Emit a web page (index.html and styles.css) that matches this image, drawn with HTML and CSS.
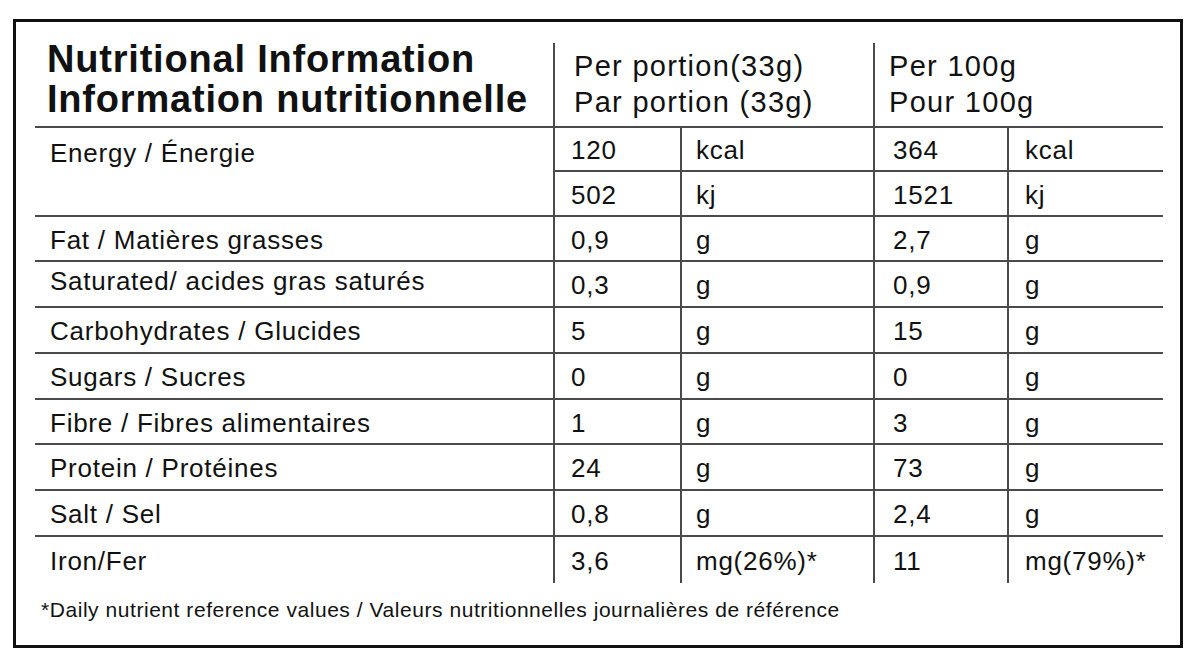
FILE: index.html
```html
<!DOCTYPE html>
<html lang="en">
<head>
<meta charset="utf-8">
<title>Nutritional Information</title>
<link rel="stylesheet" href="styles.css">
</head>
<body>
<div class="panel">
  <div class="table">
    <div class="cell head title"><div class="title-text">Nutritional Information<br>Information nutritionnelle</div></div>
    <div class="cell head col-a">Per portion(33g)<br>Par portion (33g)</div>
    <div class="cell head col-b">Per 100g<br>Pour 100g</div>

    <div class="cell label energy">Energy / Énergie</div>
    <div class="cell v1">120</div><div class="cell u1">kcal</div><div class="cell v2">364</div><div class="cell u2">kcal</div>
    <div class="cell v1">502</div><div class="cell u1">kj</div><div class="cell v2">1521</div><div class="cell u2">kj</div>

    <div class="cell label">Fat / Matières grasses</div>
    <div class="cell v1">0,9</div><div class="cell u1">g</div><div class="cell v2">2,7</div><div class="cell u2">g</div>

    <div class="cell label up">Saturated/ acides gras saturés</div>
    <div class="cell v1">0,3</div><div class="cell u1">g</div><div class="cell v2">0,9</div><div class="cell u2">g</div>

    <div class="cell label">Carbohydrates / Glucides</div>
    <div class="cell v1">5</div><div class="cell u1">g</div><div class="cell v2">15</div><div class="cell u2">g</div>

    <div class="cell label">Sugars / Sucres</div>
    <div class="cell v1">0</div><div class="cell u1">g</div><div class="cell v2">0</div><div class="cell u2">g</div>

    <div class="cell label">Fibre / Fibres alimentaires</div>
    <div class="cell v1">1</div><div class="cell u1">g</div><div class="cell v2">3</div><div class="cell u2">g</div>

    <div class="cell label">Protein / Protéines</div>
    <div class="cell v1">24</div><div class="cell u1">g</div><div class="cell v2">73</div><div class="cell u2">g</div>

    <div class="cell label">Salt / Sel</div>
    <div class="cell v1">0,8</div><div class="cell u1">g</div><div class="cell v2">2,4</div><div class="cell u2">g</div>

    <div class="cell label last">Iron/Fer</div>
    <div class="cell v1 last">3,6</div><div class="cell u1 last">mg(26%)*</div><div class="cell v2 last">11</div><div class="cell u2 last">mg(79%)*</div>
  </div>
  <p class="note">*Daily nutrient reference values / Valeurs nutritionnelles journalières de référence</p>
</div>
</body>
</html>
```

FILE: styles.css
```css
html, body {
  margin: 0;
  padding: 0;
  background: #ffffff;
}

body {
  font-family: "Liberation Sans", Arial, Helvetica, sans-serif;
  color: #111111;
}

.panel {
  box-sizing: border-box;
  width: 1170px;
  height: 629px;
  margin: 19px 0 0 13px;
  border: 3px solid #111111;
  padding: 21px 17px 0 19px;
}

.table {
  display: grid;
  grid-template-columns: 518px 127px 193px 134px 156px;
  grid-template-rows: 85px 44px 45px 45px 46px 46px 46px 45px 46px 46px 46px;
  width: 1128px;
}

.cell {
  box-sizing: border-box;
  display: flex;
  align-items: center;
  border-bottom: 2px solid #4a4a4a;
  font-size: 26px;
  letter-spacing: 0.75px;
  white-space: nowrap;
  padding-top: 3px;
}

.cell.last {
  border-bottom: none;
}

.head {
  display: block;
}

.title {
  font-weight: bold;
  font-size: 38px;
  line-height: 40px;
  letter-spacing: 0.8px;
  padding-left: 12px;
  padding-top: 0;
}

.title-text {
  margin-top: -4px;
}

.col-a,
.col-b {
  grid-column: span 2;
  border-left: 2px solid #4a4a4a;
  font-size: 29px;
  line-height: 36px;
  letter-spacing: 1.3px;
  padding-top: 5px;
}

.col-a {
  padding-left: 19px;
}

.col-b {
  padding-left: 14px;
}

.label {
  padding-left: 15px;
}

.label.up {
  padding-top: 0;
  padding-bottom: 5px;
}

.energy {
  grid-row: span 2;
  align-items: flex-start;
  padding-top: 10px;
}

.v1, .u1, .v2, .u2 {
  border-left: 2px solid #4a4a4a;
}

.v1 {
  padding-left: 16px;
}

.u1 {
  padding-left: 14px;
}

.v2 {
  padding-left: 18px;
}

.u2 {
  padding-left: 16px;
}

.note {
  margin: 15px 0 0 0;
  padding-left: 6px;
  font-size: 21px;
  line-height: 24px;
  letter-spacing: 0.55px;
}
```
